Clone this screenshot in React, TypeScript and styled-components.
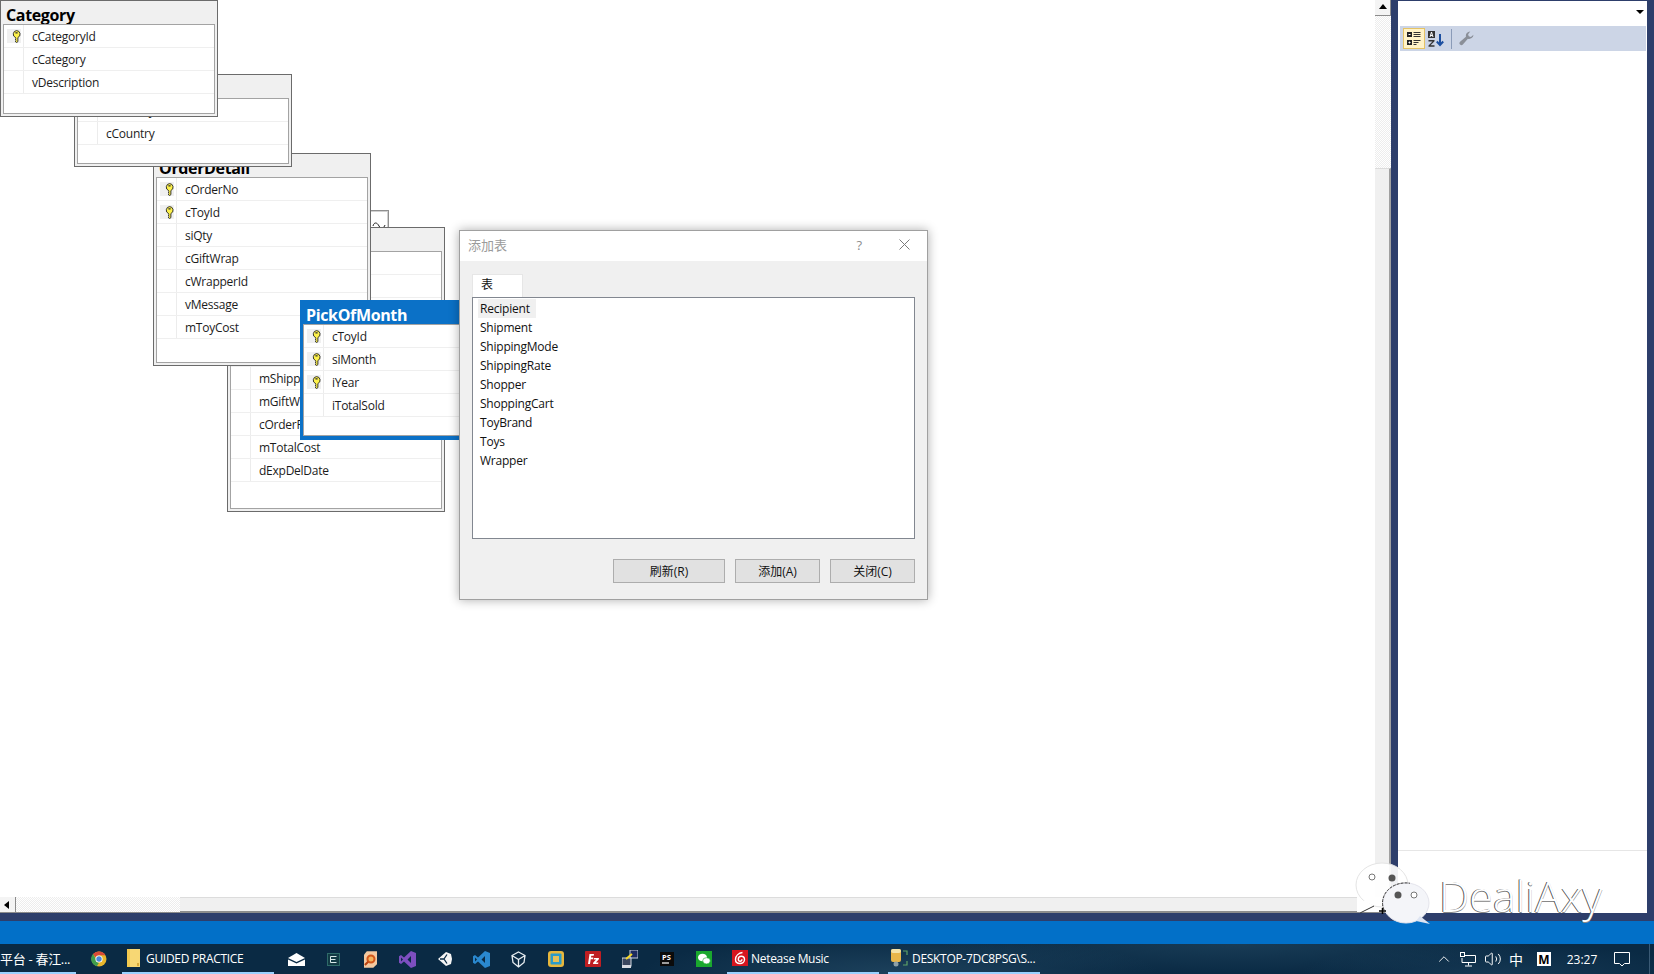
import React from "react";
import styled, { createGlobalStyle } from "styled-components";
import { ChevronUp, Volume2 } from "lucide-react";

const GlobalStyle = createGlobalStyle`
	html, body {
		margin: 0;
		padding: 0;
		background: #fff;
		overflow: hidden;
	}
	* {
		box-sizing: border-box;
	}
`

const UI_FONT = `"Open Sans", "Noto Sans CJK SC", sans-serif`
const dither = `repeating-conic-gradient(#fff 0 25%, #ededed 0 50%) 0 0 / 2px 2px`

const Page = styled.div`
	position: relative;
	width: 1654px;
	height: 974px;
	display: flex;
	flex-direction: column;
	overflow: hidden;
	font-family: ${UI_FONT};
`

const Workspace = styled.div`
	flex: 1;
	display: flex;
	min-height: 0;
	background: #2d3e6b;
`

const DesignerColumn = styled.div`
	width: 1391px;
	display: flex;
	flex-direction: column;
	background: #fff;
`

const DesignerRow = styled.div`
	flex: 1;
	display: flex;
	min-height: 0;
`

const Canvas = styled.div`
	position: relative;
	flex: 1;
	overflow: hidden;
	background: #fff;
`

const VScroll = styled.div`
	width: 16px;
	display: flex;
	flex-direction: column;
`

const VTrack = styled.div`
	height: 152px;
	background: ${dither};
`

const VThumb = styled.div`
	flex: 1;
	background: #f0f0f0;
	border-right: 2px solid #a0a0a0;
	border-top: 1px solid #dcdcdc;
`

const ScrollButton = styled.div`
	width: 16px;
	height: 16px;
	flex: none;
	display: flex;
	align-items: center;
	justify-content: center;
	background: #f4f4f4;
	border-right: 1px solid #8c8c8c;
	border-bottom: 1px solid #8c8c8c;
	svg {
		display: block;
	}
`

const HScroll = styled.div`
	height: 16px;
	flex: none;
	display: flex;
	border-bottom: 1px solid #8c8c8c;
`

const HTrack = styled.div`
	width: 164px;
	background: ${dither};
`

const HThumb = styled.div`
	width: 1177px;
	background: #f0f0f0;
	border-top: 1px solid #dcdcdc;
	border-bottom: 1px solid #8c8c8c;
`

const PropertiesPanel = styled.div`
	width: 249px;
	margin-left: 7px;
	margin-top: 1px;
	display: flex;
	flex-direction: column;
	background: #fff;
`

const ObjectCombo = styled.div`
	height: 25px;
	display: flex;
	align-items: center;
	justify-content: flex-end;
	padding-right: 3px;
`

const PropToolbar = styled.div`
	height: 25px;
	margin-left: 2px;
	margin-right: 1px;
	display: flex;
	align-items: center;
	background: #ccd5e6;
`

const PropButton = styled.div<{ $on?: boolean }>`
	width: 22px;
	height: 21px;
	margin-left: ${p => (p.$on ? "3px" : "0")};
	display: flex;
	align-items: center;
	justify-content: center;
	background: ${p => (p.$on ? "#fff3c8" : "transparent")};
	border: 1px solid ${p => (p.$on ? "#e5c365" : "transparent")};
`

const PropDivider = styled.div`
	width: 1px;
	height: 20px;
	margin: 0 7px 0 4px;
	background: #8a9bb8;
`

const PropGrid = styled.div`
	flex: 1;
	border-bottom: 1px solid #e6e6e6;
`

const PropHelp = styled.div`
	height: 62px;
	flex: none;
`

const BottomEdge = styled.div`
	height: 8px;
	flex: none;
	background: #2d3e6b;
`

const StatusBar = styled.div`
	height: 23px;
	flex: none;
	background: #0270c8;
`

const Taskbar = styled.div`
	height: 30px;
	flex: none;
	display: flex;
	align-items: stretch;
	color: #fff;
	font-size: 12px;
	background:
		radial-gradient(ellipse 260px 40px at 900px 30px, rgba(52, 94, 122, .45), transparent),
		radial-gradient(ellipse 300px 30px at 1240px 0, rgba(46, 86, 112, .4), transparent),
		radial-gradient(ellipse 200px 30px at 1500px 30px, rgba(40, 80, 110, .35), transparent),
		#0a2a44;
`

const TaskApp = styled.div<{ $w: number; $ml?: number; $pad?: number; $gap?: number; $size?: number }>`
	width: ${p => p.$w}px;
	margin-left: ${p => p.$ml ?? 0}px;
	flex: none;
	display: flex;
	align-items: center;
	gap: ${p => p.$gap ?? 5}px;
	padding-left: ${p => p.$pad ?? 5}px;
	border-bottom: 2px solid #99d1ff;
	font-size: ${p => p.$size ?? 12}px;
	letter-spacing: -0.3px;
	white-space: nowrap;
	overflow: hidden;
	svg {
		flex: none;
	}
`

const TaskIcon = styled.div<{ $ml?: number }>`
	width: 37px;
	margin-left: ${p => p.$ml ?? 0}px;
	flex: none;
	display: flex;
	align-items: center;
	justify-content: center;
`

const Tray = styled.div`
	margin-left: auto;
	margin-right: 4px;
	width: 217px;
	display: flex;
	border-right: 1px solid #3a5a75;
`

const TrayItem = styled.div<{ $w: number; $size?: number }>`
	width: ${p => p.$w}px;
	flex: none;
	display: flex;
	align-items: center;
	justify-content: center;
	font-size: ${p => p.$size ?? 12}px;
`

// tables on the diagram surface
const NodeFrame = styled.div<{ $x: number; $y: number; $w: number; $h: number; $active?: boolean }>`
	position: absolute;
	left: ${p => p.$x}px;
	top: ${p => p.$y}px;
	width: ${p => p.$w}px;
	height: ${p => p.$h}px;
	display: flex;
	flex-direction: column;
	padding: ${p => (p.$active ? "0 3px 3px 2px" : "0 2px 2px")};
	background: ${p => (p.$active ? "#0b71c7" : "#f0f0f0")};
	border: 1px solid ${p => (p.$active ? "#0b71c7" : "#6b6b6b")};
`

const NodeTitle = styled.div<{ $active?: boolean }>`
	height: 23px;
	flex: none;
	padding: 4px 0 0 3px;
	font-size: 16px;
	line-height: 20px;
	font-weight: 700;
	letter-spacing: -0.35px;
	color: ${p => (p.$active ? "#fff" : "#000")};
`

const NodeBody = styled.div`
	flex: 1;
	background: #fff;
	border: 1px solid #a3a3a3;
`

const NodeRow = styled.div`
	height: 23px;
	display: flex;
	align-items: center;
	padding-left: 3px;
	border-bottom: 1px solid #efefef;
	font-size: 12px;
	letter-spacing: -0.25px;
	color: #1c1c1c;
`

const KeyCell = styled.div`
	width: 17px;
	height: 22px;
	flex: none;
	display: flex;
	align-items: center;
	border-right: 1px solid #ececec;
`

const KeyMark = styled.div`
	width: 14px;
	height: 14px;
	display: flex;
	align-items: center;
	justify-content: flex-end;
	background: #f0f0f0;
`

const FieldName = styled.span`
	margin-left: 8px;
	white-space: nowrap;
`

const Connector = styled.div`
	position: absolute;
	left: 371px;
	top: 210px;
	width: 18px;
	height: 20px;
	border: 1px solid #8f8f8f;
	border-left: none;
	box-shadow: inset -1px 1px 0 #d0d0d0;
	background: #fff;
	svg {
		position: absolute;
		left: 1px;
		bottom: 2px;
	}
`

const Dialog = styled.div`
	position: absolute;
	left: 459px;
	top: 230px;
	width: 469px;
	height: 370px;
	background: #f0f0f0;
	border: 1px solid #a0a0a0;
	box-shadow: 0 0 10px rgba(0, 0, 0, .32);
	display: flex;
	flex-direction: column;
`

const DialogTitle = styled.div`
	height: 30px;
	flex: none;
	display: flex;
	align-items: center;
	padding: 0 17px 3px 8px;
	background: #fff;
	color: #9b9b9b;
	font-size: 13px;
`

const HelpMark = styled.span`
	margin-left: auto;
	margin-right: 37px;
	color: #8e8e8e;
	font-size: 13px;
`

const DialogBody = styled.div`
	flex: 1;
	display: flex;
	flex-direction: column;
	padding: 13px 12px 0 12px;
`

const Tab = styled.div`
	width: 51px;
	height: 23px;
	flex: none;
	padding-left: 8px;
	background: #fff;
	border: 1px solid #e6e6e6;
	border-bottom: none;
	font-size: 12px;
	line-height: 19px;
	color: #111;
`

const ListBox = styled.div`
	height: 242px;
	flex: none;
	padding: 1px 5px;
	background: #fff;
	border: 1px solid #828790;
`

const ListItem = styled.div<{ $selected?: boolean }>`
	width: fit-content;
	height: 19px;
	padding: 0 6px 0 2px;
	font-size: 12px;
	line-height: 19px;
	letter-spacing: -0.22px;
	color: #111;
	background: ${p => (p.$selected ? "#f0f0f0" : "transparent")};
`

const ButtonRow = styled.div`
	margin-top: 20px;
	display: flex;
	justify-content: flex-end;
	gap: 10px;
`

const DialogButton = styled.div<{ $w: number }>`
	width: ${p => p.$w}px;
	height: 24px;
	display: flex;
	align-items: center;
	justify-content: center;
	background: #e1e1e1;
	border: 1px solid #adadad;
	font-size: 12px;
	color: #111;
`

const WatermarkLogo = styled.svg`
	position: absolute;
	left: 1350px;
	top: 858px;
`

const WatermarkText = styled.div`
	position: absolute;
	left: 1439px;
	top: 868px;
	font-family: "Open Sans", sans-serif;
	font-weight: 300;
	font-size: 43px;
	line-height: 56px;
	color: #fff;
	text-shadow: -1px 0 0 #555, 0 1px 0 #888;
	white-space: nowrap;
`

type Table = {
	name: string
	x: number
	y: number
	h: number
	active?: boolean
	fields: [string, boolean?][]
}

const orders: Table = {
	name: "Orders", x: 227, y: 227, h: 285,
	fields: [["cOrderNo", true], ["dOrderDate"], ["cCartId"], ["cShopperId"], ["cShippingModeId"], ["mShippingCharges"], ["mGiftWrapCharges"], ["cOrderProcessed"], ["mTotalCost"], ["dExpDelDate"]],
}
const orderDetail: Table = {
	name: "OrderDetail", x: 153, y: 153, h: 213,
	fields: [["cOrderNo", true], ["cToyId", true], ["siQty"], ["cGiftWrap"], ["cWrapperId"], ["vMessage"], ["mToyCost"]],
}
const country: Table = {
	name: "Country", x: 74, y: 74, h: 93,
	fields: [["cCountryId", true], ["cCountry"]],
}
const category: Table = {
	name: "Category", x: 0, y: 0, h: 117,
	fields: [["cCategoryId", true], ["cCategory"], ["vDescription"]],
}
const pickOfMonth: Table = {
	name: "PickOfMonth", x: 300, y: 300, h: 140, active: true,
	fields: [["cToyId", true], ["siMonth", true], ["iYear", true], ["iTotalSold"]],
}

const tableNames = ["Recipient", "Shipment", "ShippingMode", "ShippingRate", "Shopper", "ShoppingCart", "ToyBrand", "Toys", "Wrapper"]

function KeyIcon() {
	return (
		<svg width="9" height="13" viewBox="0 0 9 13">
			<path d="M4.5 .6a3.6 3.6 0 0 1 1.4 6.9v4.1l-1.2 1-1.2-.8v-.8l.7-.5-.7-.5v-.8l.7-.5-.7-.5v-.7A3.6 3.6 0 0 1 4.5 .6z" fill="#fdf14a" stroke="#222" strokeWidth=".9" />
			<rect x="3.4" y="2.2" width="2.2" height="1.3" fill="#333" />
		</svg>
	)
}

function TableNode({ table }: { table: Table }) {
	return (
		<NodeFrame $x={table.x} $y={table.y} $w={218} $h={table.h} $active={table.active}>
			<NodeTitle $active={table.active}>{table.name}</NodeTitle>
			<NodeBody>
				{table.fields.map(([field, isKey]) =>
					<NodeRow key={field}>
						<KeyCell>{isKey && <KeyMark><KeyIcon /></KeyMark>}</KeyCell>
						<FieldName>{field}</FieldName>
					</NodeRow>
				)}
			</NodeBody>
		</NodeFrame>
	)
}

function Arrow({ dir }: { dir: "up" | "left" | "down" }) {
	const points = { up: "0,5 8,5 4,0", left: "5,0 5,8 0,4", down: "0,0 8,0 4,4" }[dir]
	return <svg width="8" height="8" viewBox="0 0 8 8"><polygon points={points} fill="#000" /></svg>
}

function CategorizedIcon() {
	return (
		<svg width="16" height="16" viewBox="0 0 16 16">
			<rect x="1" y="1" width="5" height="5" fill="#222" />
			<rect x="1" y="9" width="5" height="5" fill="#222" />
			<path d="M2.5 3.5h2M2.5 11.5h2M3.5 10.5v2" stroke="#fff" strokeWidth="1" />
			<path d="M7.5 1.5h7M7.5 3.5h7M7.5 5.5h7M7.5 9.5h7M7.5 11.5h5M7.5 13.5h3" stroke="#333" strokeWidth="1" />
		</svg>
	)
}

function SortIcon() {
	return (
		<svg width="18" height="18" viewBox="0 0 18 18">
			<rect x="1" y="1" width="7" height="7" fill="#333" />
			<path d="M3 7l1.5-5 1.5 5M3.5 5.5h2" stroke="#fff" strokeWidth="1" fill="none" />
			<path d="M1.5 10h6v1.3l-4 4h4v1.500h-6v-1.300l4-4h-4z" fill="#333" />
			<path d="M13 4v11M9.800 11.500l3.200 3.500 3.200-3.500" stroke="#1c4fa0" strokeWidth="2" fill="none" />
		</svg>
	)
}

function WrenchIcon() {
	return (
		<svg width="15" height="15" viewBox="0 0 14 14">
			<path d="M13.500 3.500a4 4 0 0 1-5.200 3.700l-4.700 5.500a1.800 1.800 0 0 1-2.600-2.600l5.500-4.700A4 4 0 0 1 10.500.5L8.500 3l.6 2 2 .5z" fill="#8a8f98" />
		</svg>
	)
}

function ChromeIcon() {
	return (
		<svg width="16" height="16" viewBox="0 0 16 16">
			<circle cx="8" cy="8" r="7.500" fill="#e8b62c" />
			<path d="M8 .5A7.500 7.500 0 0 1 14.500 4.200H8A3.800 3.800 0 0 0 4.500 6.500L2 3A7.500 7.500 0 0 1 8 .5z" fill="#d84a38" />
			<path d="M2 3l3.300 5.700A3 3 0 0 0 8 11.800l-2.200 3.400A7.500 7.500 0 0 1 2 3z" fill="#3f9d4d" />
			<circle cx="8" cy="8" r="3.600" fill="#fff" />
			<circle cx="8" cy="8" r="2.700" fill="#4a86d8" />
		</svg>
	)
}

function FolderIcon() {
	return (
		<svg width="14" height="18" viewBox="0 0 14 18">
			<rect x="0" y="0" width="13" height="18" fill="#f7d774" />
			<rect x="0" y="0" width="3" height="18" fill="#f2c94f" />
			<rect x="10" y="14" width="2" height="3" fill="#d8a93a" />
		</svg>
	)
}

function MailIcon() {
	return (
		<svg width="17" height="13" viewBox="0 0 17 13">
			<path d="M0 5l8.500-5L17 5l-8.500 4z" fill="#fff" />
			<path d="M0 6.500l8.500 4 8.500-4V13H0z" fill="#fff" />
		</svg>
	)
}

function EdgeBoxIcon() {
	return (
		<svg width="13" height="13" viewBox="0 0 13 13">
			<rect x=".5" y=".5" width="12" height="12" fill="#123a44" stroke="#2e6a68" />
			<path d="M9.500 3.500h-6v6h6M3.500 6.500h5" stroke="#d8e8e8" strokeWidth="1" fill="none" />
		</svg>
	)
}

function OrangeDocIcon() {
	return (
		<svg width="13" height="17" viewBox="0 0 14 18">
			<path d="M3 0h11v14l-4 4H0V4z" fill="#f4c9a0" />
			<circle cx="7.500" cy="8.500" r="3.800" fill="#f2b35e" stroke="#d3561a" strokeWidth="2.200" />
			<path d="M1 15l3.500-3.500" stroke="#b8410f" strokeWidth="2.200" />
		</svg>
	)
}

function VisualStudioIcon() {
	return (
		<svg width="17" height="17" viewBox="0 0 17 17">
			<path d="M12 0l5 2v13l-5 2-7-6.500L2 13l-2-1.200V5.200L2 4l3 2.500zM12 5l-3.500 3.500L12 12zM2 6.500v4L4 8.500z" fill="#7d4fc0" fillRule="evenodd" />
		</svg>
	)
}

function UnityIcon() {
	return (
		<svg width="15" height="16" viewBox="0 0 15 16">
			<path d="M1 8l8-7 5 2 1 5-1 5-5 2z" fill="#f4f4f4" />
			<path d="M7 8H3M7 8l3-4.500M7 8l3 4.500" stroke="#0a2a44" strokeWidth="1.300" />
		</svg>
	)
}

function VsCodeIcon() {
	return (
		<svg width="17" height="17" viewBox="0 0 17 17">
			<path d="M12 0l5 2v13l-5 2-7-6.500L2 13l-2-1.200V5.200L2 4l3 2.500zM12 5l-3.500 3.500L12 12zM2 6.500v4L4 8.500z" fill="#2a88cf" fillRule="evenodd" />
		</svg>
	)
}

function CubeIcon() {
	return (
		<svg width="15" height="17" viewBox="0 0 15 17" fill="none" stroke="#e8eef2" strokeWidth="1.300">
			<path d="M7.500 1L14 4.500l-1 7L7.500 16 2 11.500l-1-7zM1 4.500l6.500 4 6.500-4M7.500 8.500V16" />
		</svg>
	)
}

function SquareFrameIcon() {
	return (
		<svg width="16" height="16" viewBox="0 0 16 16">
			<rect x="0" y="0" width="16" height="16" rx="3" fill="#e7b73c" />
			<rect x="2.500" y="2.500" width="11" height="11" rx="1" fill="#2a9bc9" />
			<rect x="5" y="5" width="6" height="6" fill="#e4c05a" />
		</svg>
	)
}

function FileZillaIcon() {
	return (
		<svg width="16" height="16" viewBox="0 0 16 16">
			<rect width="16" height="16" rx="1" fill="#bf1e22" />
			<path d="M3 13l1.500-10H9l-.3 1.800H6.300L6 6.500h2.300L8 8.300H5.700L5 13zM9 7h5l-.3 1.500-2.800 3h2.500l-.3 1.500H8l.3-1.500 2.800-3H8.700z" fill="#fff" />
		</svg>
	)
}

function TransferIcon() {
	return (
		<svg width="16" height="18" viewBox="0 0 16 18">
			<rect x="8" y="0" width="8" height="8" fill="#1d2b60" stroke="#c9d0dc" />
			<rect x="0" y="8" width="9" height="8" fill="#39465f" stroke="#d6dae2" />
			<rect x="0" y="15" width="9" height="3" fill="#d6dae2" />
			<path d="M4 9l6-5" stroke="#f6d829" strokeWidth="2" />
		</svg>
	)
}

function StormIcon() {
	return (
		<svg width="14" height="14" viewBox="0 0 14 14">
			<rect width="14" height="14" fill="#0b0b0b" />
			<path d="M2 11h7" stroke="#fff" strokeWidth="1.200" />
			<text x="2" y="8" fontSize="7.500" fontWeight="700" fill="#fff" fontFamily="Open Sans, sans-serif">PS</text>
		</svg>
	)
}

function WeChatTileIcon() {
	return (
		<svg width="16" height="16" viewBox="0 0 16 16">
			<rect width="16" height="16" fill="#1aa82e" />
			<ellipse cx="6.500" cy="6.500" rx="4.500" ry="3.800" fill="#fff" />
			<ellipse cx="10.500" cy="9.800" rx="3.800" ry="3.100" fill="#fff" stroke="#1aa82e" strokeWidth=".6" />
		</svg>
	)
}

function NeteaseIcon() {
	return (
		<svg width="16" height="16" viewBox="0 0 16 16">
			<rect width="16" height="16" fill="#d7151f" />
			<path d="M10.500 2.500C7 3 3.500 5.500 3.500 9.500c0 2.500 2 4 4.500 4s4.500-1.700 4.500-4c0-2-1.500-3.300-3.200-3.300S6.300 7.500 6.300 9.200c0 1.200.8 2 1.800 2s1.800-.8 1.800-2" fill="none" stroke="#fff" strokeWidth="1.400" />
		</svg>
	)
}

function DatabaseIcon() {
	return (
		<svg width="17" height="18" viewBox="0 0 17 18">
			<rect x="0" y="0" width="10" height="13" rx="2" fill="#e8b64a" />
			<rect x="0" y="0" width="10" height="4" rx="2" fill="#f4e3a8" />
			<path d="M12 2h4v4M12 16h4v-4" stroke="#5fa267" strokeWidth="1.200" fill="none" />
			<circle cx="5" cy="15" r="2.500" fill="#8da0a8" />
		</svg>
	)
}

function NetworkIcon() {
	return (
		<svg width="16" height="15" viewBox="0 0 16 15" fill="none" stroke="#fff" strokeWidth="1">
			<path d="M4 3.500h11.500v7H2V6M8.500 10.500v3M5 14h7" />
			<rect x=".5" y=".5" width="4" height="4" />
		</svg>
	)
}

function NotifyIcon() {
	return (
		<svg width="16" height="16" viewBox="0 0 16 16" fill="none" stroke="#fff" strokeWidth="1">
			<path d="M.5 1.500h15v11h-5l-2.500 2.500-2.500-2.500h-5z" />
		</svg>
	)
}

const MBadge = styled.div`
	width: 14px;
	height: 14px;
	display: flex;
	align-items: center;
	justify-content: center;
	background: #fff;
	color: #000;
	font-size: 12px;
	font-weight: 700;
`

const iconRow = [MailIcon, EdgeBoxIcon, OrangeDocIcon, VisualStudioIcon, UnityIcon, VsCodeIcon, CubeIcon, SquareFrameIcon, FileZillaIcon, TransferIcon, StormIcon, WeChatTileIcon]

export default function App() {
	return <>
		<GlobalStyle />
		<Page>
			<Workspace>
				<DesignerColumn>
					<DesignerRow>
						<Canvas>
							<Connector>
								<svg width="14" height="5" viewBox="0 0 14 5">
									<path d="M1 4c1-4 4-4 6 0s5 2 6-1" fill="none" stroke="#222" strokeWidth="1" />
								</svg>
							</Connector>
							<TableNode table={orders} />
							<TableNode table={orderDetail} />
							<TableNode table={country} />
							<TableNode table={category} />
							<TableNode table={pickOfMonth} />
							<Dialog>
								<DialogTitle>
									添加表
									<HelpMark>?</HelpMark>
									<svg width="11" height="11" viewBox="0 0 11 11">
										<path d="M.5 .5l10 10M10.500 .5l-10 10" stroke="#7a7a7a" strokeWidth="1" />
									</svg>
								</DialogTitle>
								<DialogBody>
									<Tab>表</Tab>
									<ListBox>
										{tableNames.map((name, i) =>
											<ListItem key={name} $selected={i === 0}>{name}</ListItem>
										)}
									</ListBox>
									<ButtonRow>
										<DialogButton $w={112}>刷新(R)</DialogButton>
										<DialogButton $w={85}>添加(A)</DialogButton>
										<DialogButton $w={85}>关闭(C)</DialogButton>
									</ButtonRow>
								</DialogBody>
							</Dialog>
						</Canvas>
						<VScroll>
							<ScrollButton><Arrow dir="up" /></ScrollButton>
							<VTrack />
							<VThumb />
						</VScroll>
					</DesignerRow>
					<HScroll>
						<ScrollButton><Arrow dir="left" /></ScrollButton>
						<HTrack />
						<HThumb />
					</HScroll>
				</DesignerColumn>
				<PropertiesPanel>
					<ObjectCombo><Arrow dir="down" /></ObjectCombo>
					<PropToolbar>
						<PropButton $on><CategorizedIcon /></PropButton>
						<PropButton><SortIcon /></PropButton>
						<PropDivider />
						<WrenchIcon />
					</PropToolbar>
					<PropGrid />
					<PropHelp />
				</PropertiesPanel>
			</Workspace>
			<BottomEdge />
			<StatusBar />
			<Taskbar>
				<TaskApp $w={76} $pad={0} $size={13}>平台 - 春江...</TaskApp>
				<TaskIcon $ml={4}><ChromeIcon /></TaskIcon>
				<TaskApp $w={152} $ml={5}><FolderIcon />GUIDED PRACTICE</TaskApp>
				<TaskIcon $ml={4}><MailIcon /></TaskIcon>
				{iconRow.slice(1).map((Icon, i) => <TaskIcon key={i}><Icon /></TaskIcon>)}
				<TaskApp $w={152} $ml={5} $gap={3}><NeteaseIcon />Netease Music</TaskApp>
				<TaskApp $w={152} $ml={9} $pad={3} $gap={4}><DatabaseIcon />DESKTOP-7DC8PSG\S...</TaskApp>
				<Tray>
					<TrayItem $w={22}><ChevronUp size={18} strokeWidth={1.2} /></TrayItem>
					<TrayItem $w={26}><NetworkIcon /></TrayItem>
					<TrayItem $w={24}><Volume2 size={18} strokeWidth={1.3} /></TrayItem>
					<TrayItem $w={22} $size={14}>中</TrayItem>
					<TrayItem $w={34}><MBadge>M</MBadge></TrayItem>
					<TrayItem $w={42}>23:27</TrayItem>
					<TrayItem $w={38}><NotifyIcon /></TrayItem>
				</Tray>
			</Taskbar>
			<WatermarkLogo width="84" height="70" viewBox="0 0 84 70">
				<ellipse cx="32" cy="27" rx="26" ry="22" fill="#fff" fillOpacity=".93" stroke="#e4e4e4" />
				<path d="M14 42l-4 13 14-7z" fill="#fff" />
				<path d="M10 55l14-7" stroke="#333" strokeWidth="1" />
				<circle cx="22" cy="19" r="3" fill="#fff" stroke="#777" />
				<circle cx="42" cy="20" r="3.500" fill="#555" />
				<ellipse cx="56" cy="45" rx="23" ry="20" fill="#f4f5f9" stroke="#e4e4ec" />
				<path d="M34 52A23 20 0 0 1 60 25.300" fill="none" stroke="#333" strokeWidth="1" strokeDasharray="3 1" />
				<path d="M70 58l10 8-14-3z" fill="#dde4f2" />
				<circle cx="48" cy="37" r="3.500" fill="#555" />
				<circle cx="64" cy="37" r="3" fill="#fff" stroke="#777" />
				<path d="M29 53h7M32.500 50v6" stroke="#000" strokeWidth="1.500" />
			</WatermarkLogo>
			<WatermarkText>DealiAxy</WatermarkText>
		</Page>
	</>
}
